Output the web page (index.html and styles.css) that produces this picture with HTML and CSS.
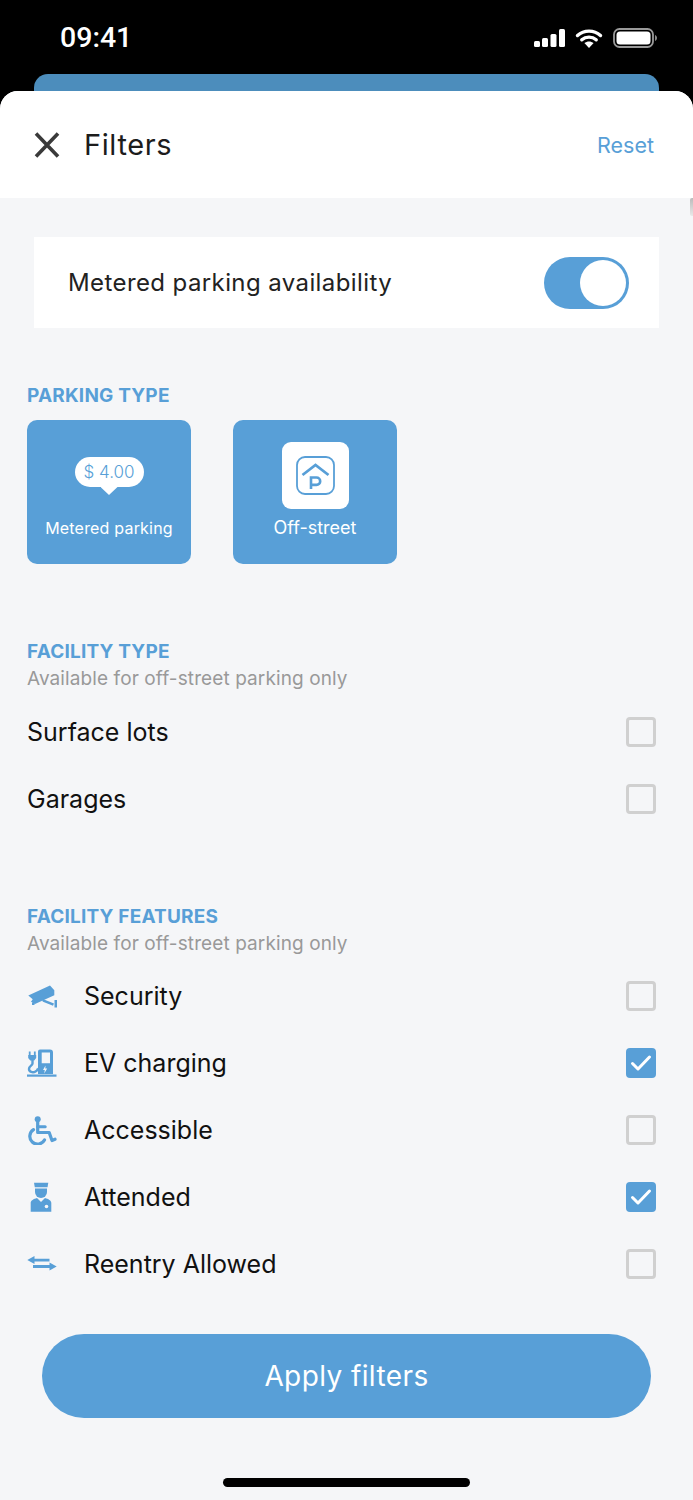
FILE: index.html
```html
<!DOCTYPE html>
<html lang="en">
<head>
<meta charset="utf-8">
<title>Filters</title>
<link rel="stylesheet" href="styles.css">
</head>
<body>
<div class="phone">
  <div class="status">
    <span class="time">09:41</span>
    <div class="status-icons">
      <svg width="32" height="20" viewBox="0 0 32 20"><g fill="#fff"><rect x="0" y="13" width="6" height="6" rx="1.5"/><rect x="8" y="10" width="6" height="9" rx="1.5"/><rect x="16.500" y="6" width="6" height="13" rx="1.5"/><rect x="25" y="1" width="6" height="18" rx="1.5"/></g></svg>
      <svg width="28" height="22" viewBox="0 0 28 22"><path d="M2.500 8.500C9 2.600 19 2.600 25.500 8.500M6.800 12.800C10.900 9.200 17.100 9.200 21.200 12.800" fill="none" stroke="#fff" stroke-width="3.400" stroke-linecap="round"/><path d="M14 21l-4.600-4.900c2.700-2.100 6.500-2.100 9.200 0z" fill="#fff"/></svg>
      <svg class="battery" width="44" height="22" viewBox="0 0 44 22"><rect x="1" y="2" width="39" height="18" rx="5.500" fill="none" stroke="#9a9a9a" stroke-width="1.800"/><rect x="3.500" y="4.500" width="34" height="13" rx="3.500" fill="#fff"/><path d="M42 8v6c1.300-.5 2-1.700 2-3s-.7-2.500-2-3z" fill="#8a8a8a"/></svg>
    </div>
  </div>
  <div class="peek"></div>
  <main class="sheet">
    <header class="topbar">
      <svg class="close" width="28" height="28" viewBox="0 0 28 28"><path d="M3 2.500L25 25.500M25 2.500L3 25.500" stroke="#3a3a3a" stroke-width="3.600" fill="none"/></svg>
      <h1 class="title">Filters</h1>
      <span class="reset">Reset</span>
    </header>
    <div class="content">
      <span class="scroll-mark"></span>
      <div class="toggle-card">
        <span class="toggle-label">Metered parking availability</span>
        <span class="toggle"><span class="knob"></span></span>
      </div>

      <section class="parking">
        <h2 class="heading">PARKING TYPE</h2>
        <div class="tiles">
          <div class="tile">
            <div class="bubble">$ 4.00</div>
            <span class="tile-label tile-label-small">Metered parking</span>
          </div>
          <div class="tile">
            <div class="p-box">
              <svg width="39" height="39" viewBox="0 0 39 39"><rect x="1" y="1" width="37" height="37" rx="8" fill="none" stroke="#589fd7" stroke-width="1.800"/><path d="M6.500 19L19.500 9l13 10" fill="none" stroke="#589fd7" stroke-width="2.800"/><path d="M15 33V21.500h5.500a3.700 3.700 0 0 1 0 7.400H15" fill="none" stroke="#589fd7" stroke-width="2.600"/></svg>
            </div>
            <span class="tile-label">Off-street</span>
          </div>
        </div>
      </section>

      <section class="facility">
        <h2 class="heading">FACILITY TYPE</h2>
        <p class="sub">Available for off-street parking only</p>
        <div class="rows rows-facility">
          <div class="row"><span class="row-text">Surface lots</span><span class="check"></span></div>
          <div class="row"><span class="row-text">Garages</span><span class="check"></span></div>
        </div>
      </section>

      <section class="features">
        <h2 class="heading">FACILITY FEATURES</h2>
        <p class="sub">Available for off-street parking only</p>
        <div class="rows rows-features">
          <div class="row">
            <svg class="row-icon" width="30" height="24" viewBox="0 0 30 24"><g fill="#589fd7"><path d="M1.300 11.500L23 1.500l4.300 4.700v5L8 20l-4-2.300 1.700-2.400z"/><path d="M15 16.500l2-1 10 4-1 2.200-10-4z"/><rect x="27.500" y="16" width="2.500" height="7.500"/><rect x="5" y="18.500" width="2.500" height="2.500"/></g></svg>
            <span class="row-text">Security</span><span class="check"></span>
          </div>
          <div class="row">
            <svg class="row-icon" width="30" height="28" viewBox="0 0 30 28"><g fill="#589fd7"><path d="M13 .5h10a3 3 0 0 1 3 3V25H11V2.500a2 2 0 0 1 2-2zM14.700 3.500v10.800h8.300V3.500zM18.500 16.500l-2.500 4.500h1.800l-.6 3.500 3-5h-1.900z" fill-rule="evenodd"/><rect x="0" y="25.500" width="29.500" height="2.200"/></g><path d="M5.500 11v3.500c0 2-3.500 2.500-3.500 5.500s4 4 6.500 2.500 2-2.500 2.500-3" fill="none" stroke="#589fd7" stroke-width="2.400"/><path d="M2.700 2.500v4M7.800 2.500v4" stroke="#589fd7" stroke-width="1.800"/><path d="M1.200 6h8v3l-2 2.500H3.200l-2-2.500z" fill="#589fd7"/></svg>
            <span class="row-text">EV charging</span><span class="check on"><svg width="22" height="18" viewBox="0 0 22 18"><path d="M2.500 9.500l5.500 5.500L19.500 3" fill="none" stroke="#fff" stroke-width="3" stroke-linecap="round" stroke-linejoin="round"/></svg></span>
          </div>
          <div class="row">
            <svg class="row-icon" width="30" height="30" viewBox="0 0 30 30"><circle cx="10.700" cy="4.300" r="3" fill="#589fd7"/><path d="M10.700 7v10.500h11.500l2.800 8 3-1.300" fill="none" stroke="#589fd7" stroke-width="3.200" stroke-linejoin="round" stroke-linecap="round"/><path d="M10.700 11.800h7.500" stroke="#589fd7" stroke-width="3" stroke-linecap="round"/><path d="M6.500 14.700a7.800 7.800 0 1 0 11 10.300" fill="none" stroke="#589fd7" stroke-width="3.200" stroke-linecap="round"/></svg>
            <span class="row-text">Accessible</span><span class="check"></span>
          </div>
          <div class="row">
            <svg class="row-icon" width="30" height="30" viewBox="0 0 30 30"><g fill="#589fd7"><path d="M7 .7h14.300l-.8 4.600H7.800z"/><path d="M8 6.500h12v3.500a6 6 0 0 1-12 0z"/><path d="M3.700 29.700V21c0-2.500 3-4 6.300-5l4 4 4-4c3.300 1 6.300 2.500 6.300 5v8.700z"/></g><circle cx="19.500" cy="24.500" r="1.800" fill="#f5f6f8"/></svg>
            <span class="row-text">Attended</span><span class="check on"><svg width="22" height="18" viewBox="0 0 22 18"><path d="M2.500 9.500l5.500 5.500L19.500 3" fill="none" stroke="#fff" stroke-width="3" stroke-linecap="round" stroke-linejoin="round"/></svg></span>
          </div>
          <div class="row">
            <svg class="row-icon" width="30" height="18" viewBox="0 0 30 18"><g fill="#589fd7"><path d="M.3 5L7.500 1v2.700H22.500v2.800H7.500V9z"/><path d="M29.700 11.500L22.500 7.500v2.600H6v2.800h16.500v2.600z"/></g></svg>
            <span class="row-text">Reentry Allowed</span><span class="check"></span>
          </div>
        </div>
      </section>

      <button class="apply" type="button">Apply filters</button>
      <div class="home"></div>
    </div>
  </main>
</div>
</body>
</html>
```
FILE: styles.css
```css
* { box-sizing: border-box; }
html, body { margin: 0; padding: 0; }
body { background: #000; font-family: Inter, "Liberation Sans", sans-serif; }
.phone { width: 693px; height: 1500px; overflow: hidden; background: #000; }
.status { height: 74px; display: flex; justify-content: space-between; align-items: flex-start; padding: 21px 37px 0 60px; }
.time { color: #fff; font-size: 28.5px; line-height: 34px; font-weight: 500; font-family: Roboto, "Liberation Sans", sans-serif; }
.status-icons { display: flex; align-items: center; gap: 9px; padding-top: 6px; }
.battery { margin-left: 1px; margin-right: -1px; }
.peek { height: 17px; margin: 0 34px; background: #4c8dbc; border-radius: 14px 14px 0 0; }
.sheet { height: 1409px; background: #f5f6f8; border-radius: 18px 18px 0 0; overflow: hidden; }
.topbar { height: 107px; background: #fff; display: flex; align-items: center; padding: 0 39px 0 33px; }
.close { flex: none; }
.title { margin: 0 0 0 23px; flex: 1; font-size: 29px; font-weight: 400; color: #1c1c1c; letter-spacing: 0.6px; }
.reset { font-size: 21.5px; color: #589fd7; }
.content { position: relative; height: 1302px; padding-top: 39px; }
.scroll-mark { position: absolute; right: 0; top: 0; width: 3px; height: 18px; background: linear-gradient(#bbb, #e8e8e8); border-radius: 2px 0 0 2px; }
.toggle-card { height: 91px; margin: 0 34px; background: #fff; display: flex; align-items: center; justify-content: space-between; padding: 0 30px 0 34px; }
.toggle-label { font-size: 24px; color: #222; letter-spacing: 0.4px; }
.toggle { width: 85px; height: 52px; border-radius: 26px; background: #589fd7; display: block; padding: 3px 3px 3px 36px; }
.knob { display: block; width: 46px; height: 46px; border-radius: 50%; background: #fff; }
.heading { margin: 0; font-size: 19px; line-height: 24px; font-weight: 700; color: #589fd7; letter-spacing: 0.2px; }
.sub { margin: 0; font-size: 19px; line-height: 30px; color: #999; letter-spacing: 0.1px; }
.parking { margin: 56px 27px 0; }
.tiles { display: flex; gap: 42px; margin-top: 12px; }
.tile { width: 164px; height: 144px; background: #589fd7; border-radius: 10px; display: flex; flex-direction: column; align-items: center; color: #fff; position: relative; }
.bubble { margin-top: 37px; width: 69px; height: 30px; border-radius: 15px; background: #fff; color: #589fd7; font-size: 17px; line-height: 30px; text-align: center; position: relative; font-weight: 300; }
.bubble::after { content: ""; position: absolute; left: 26px; top: 30px; width: 17px; height: 8px; background: #fff; clip-path: polygon(0 0, 100% 0, 50% 100%); }
.tile-label { position: absolute; top: 97px; font-size: 18px; line-height: 22px; white-space: nowrap; }
.tile-label-small { font-size: 16px; letter-spacing: 0.2px; }
.p-box { margin-top: 22px; width: 67px; height: 67px; border-radius: 9px; background: #fff; display: flex; align-items: center; justify-content: center; }
.facility { margin: 76px 37px 0 27px; }
.features { margin: 73px 37px 0 27px; }
.rows-facility { margin-top: 4px; }
.rows-features { margin-top: 3px; }
.row { height: 67px; display: flex; align-items: center; }
.row-icon { flex: none; margin-right: 27px; }
.row-text { flex: 1; font-size: 25px; color: #111; }
.check { flex: none; width: 30px; height: 30px; border: 3.5px solid #d0d0d0; border-radius: 4px; }
.check.on { background: #589fd7; border: 0; display: flex; align-items: center; justify-content: center; }
.apply { display: block; margin: 37px 0 0 42px; width: 609px; height: 84px; border: 0; border-radius: 42px; background: #589fd7; color: #fff; font: 400 28px Inter, sans-serif; letter-spacing: 0.4px; }
.home { margin: 60px 0 0 223px; width: 247px; height: 9px; border-radius: 5px; background: #000; }
```
